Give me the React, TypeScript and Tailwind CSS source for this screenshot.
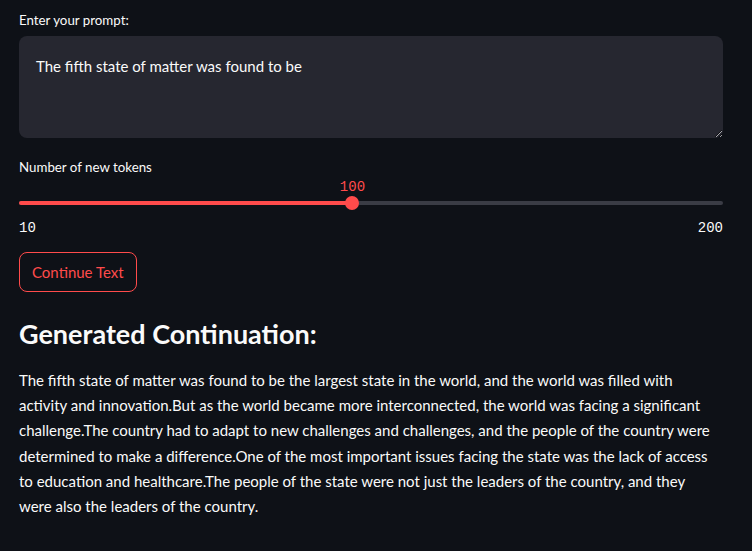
import { useState } from 'react';

const lines = [
  'The fifth state of matter was found to be the largest state in the world, and the world was filled with',
  'activity and innovation.But as the world became more interconnected, the world was facing a significant',
  'challenge.The country had to adapt to new challenges and challenges, and the people of the country were',
  'determined to make a difference.One of the most important issues facing the state was the lack of access',
  'to education and healthcare.The people of the state were not just the leaders of the country, and they',
  'were also the leaders of the country.',
];

export default function App() {
  const [prompt, setPrompt] = useState('The fifth state of matter was found to be');
  const [tokens, setTokens] = useState(100);

  const pct = ((tokens - 10) / 190) * 100;

  return (
    <div className="min-h-[551px] bg-[#0e1117] text-[#fafafa] pl-[19px] pr-[29px] pt-[11px] font-['Lato',sans-serif]">
      {/* Prompt */}
      <label className="block text-[13.3px] leading-[18px] mb-[7px]">Enter your prompt:</label>
      <textarea
        value={prompt}
        onChange={(e) => setPrompt(e.target.value)}
        className="block w-full h-[102px] bg-[#262730] rounded-lg px-[17px] py-[18px] text-[15px] leading-[24px] text-[#fafafa] outline-none resize-y"
      />

      {/* Slider */}
      <label className="block text-[13.3px] leading-[18px] mt-[20px]">Number of new tokens</label>
      <div className="relative mt-[3px] flex flex-col">
        <div className="flex h-[16px]">
          <div className="shrink-0" style={{ width: `${pct}%` }} />
          <span className="-translate-x-1/2 font-['Liberation_Mono',monospace] text-[14px] leading-[16px] text-[#ff4b4b]">
            {tokens}
          </span>
        </div>
        <div className="flex items-center h-[4px] mt-[6px] rounded bg-[#3a3c45]">
          <div className="h-full rounded bg-[#ff4b4b] shrink-0" style={{ width: `${pct}%` }} />
          <div className="shrink-0 w-[14px] h-[14px] -ml-[7px] rounded-full bg-[#ff4b4b]" />
        </div>
        <input
          type="range"
          min={10}
          max={200}
          value={tokens}
          onChange={(e) => setTokens(Number(e.target.value))}
          className="absolute inset-x-0 bottom-0 h-[18px] opacity-0 cursor-pointer"
        />
      </div>
      <div className="flex justify-between mt-[14px] font-['Liberation_Mono',monospace] text-[14px] leading-[18px]">
        <span>10</span>
        <span>200</span>
      </div>

      {/* Button */}
      <button className="mt-[15px] h-[40px] px-[12px] rounded-lg border border-[#ff4b4b] text-[#ff4b4b] text-[15px] bg-[#0e1117]">
        Continue Text
      </button>

      {/* Output */}
      <h2 className="mt-[24px] text-[27px] leading-[36px] font-bold">Generated Continuation:</h2>
      <p className="mt-[16px] text-[15px] leading-[25.2px] whitespace-nowrap">
        {lines.map((l, i) => (
          <span key={i} className="block">
            {l}
          </span>
        ))}
      </p>
    </div>
  );
}
